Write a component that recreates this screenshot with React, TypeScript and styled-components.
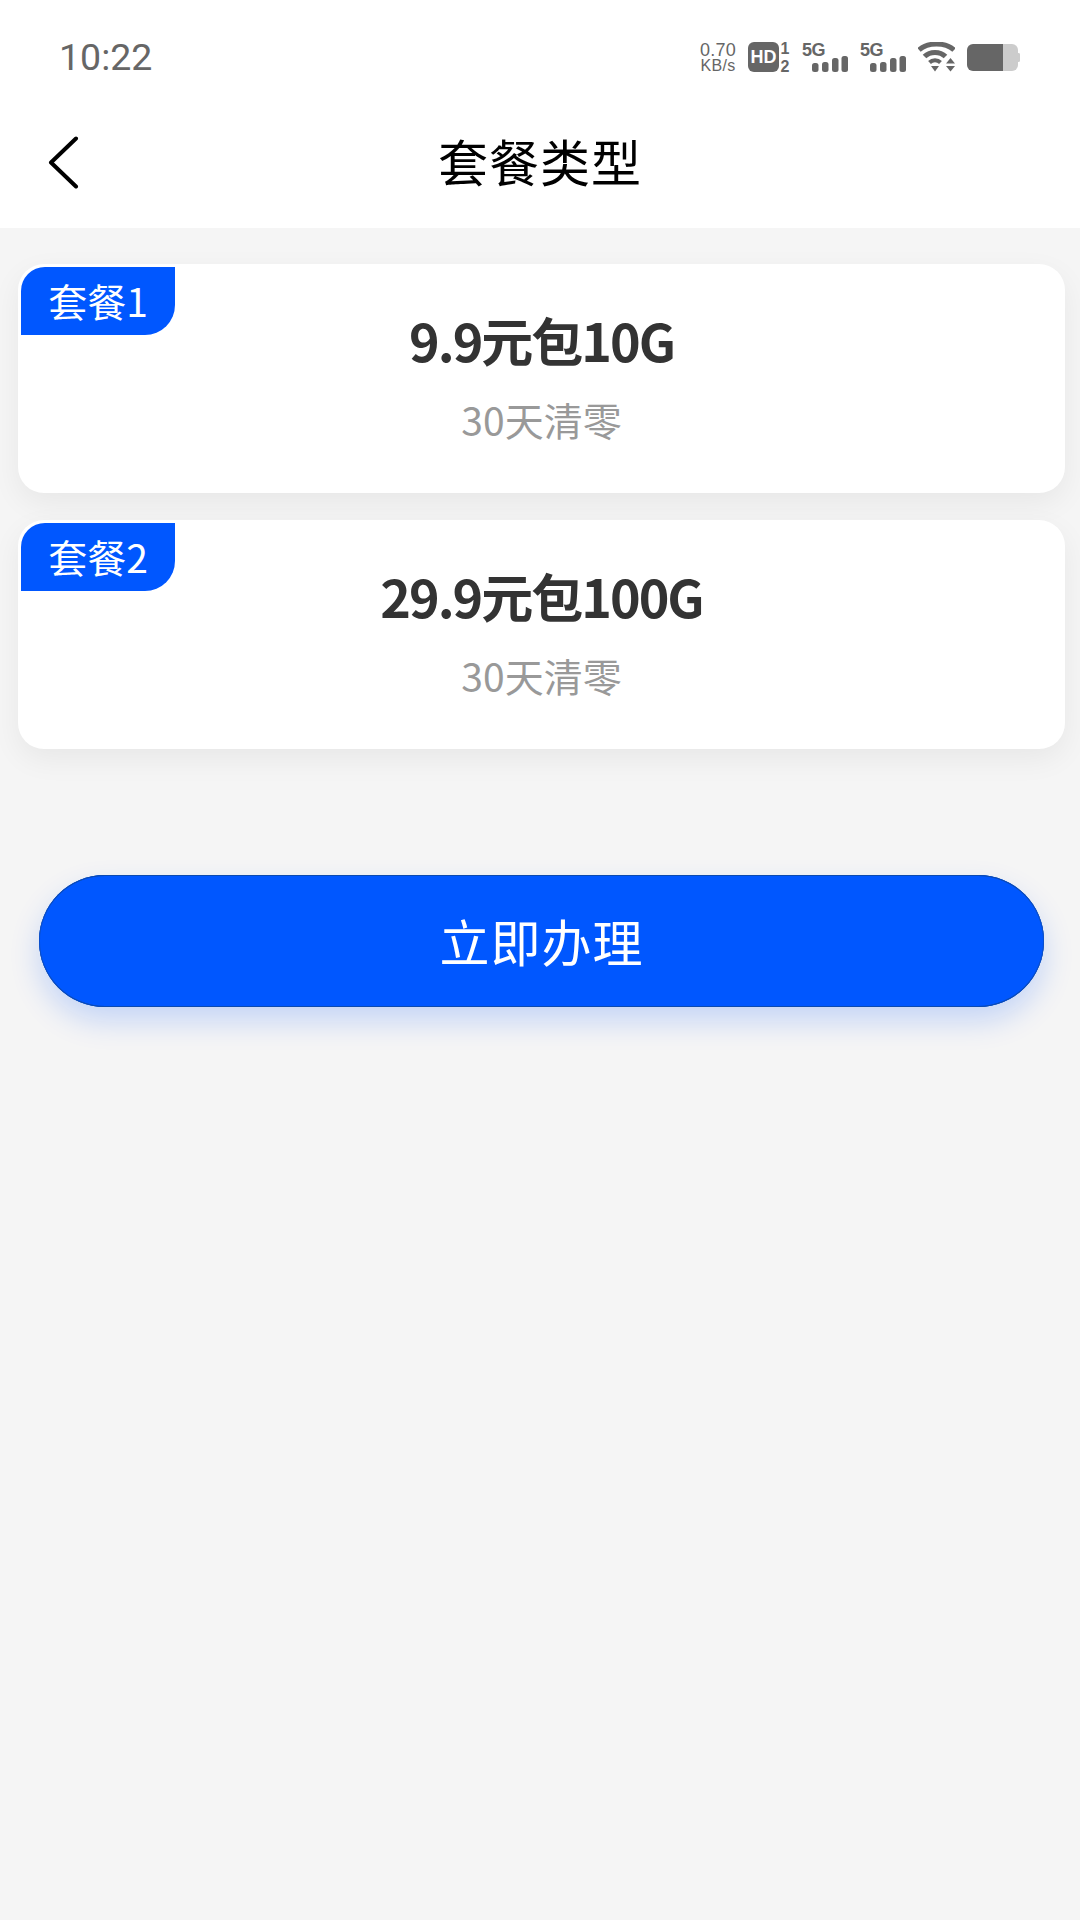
import styled, { createGlobalStyle } from "styled-components";

const GlobalStyle = createGlobalStyle`
  html, body {
    margin: 0;
    padding: 0;
    background-color: #f5f5f5;
  }
  body {
    font-family: "Noto Sans CJK SC", "Noto Sans", sans-serif;
  }
`;

const Page = styled.div`
  width: 1080px;
  min-height: 1920px;
  background-color: #f5f5f5;
`;

const Header = styled.header`
  background-color: #fff;
  height: 228px;
`;

const StatusBar = styled.div`
  height: 96px;
  padding: 18px 60px 0 59px;
  box-sizing: border-box;
  display: flex;
  align-items: center;
  justify-content: space-between;
`;

const Time = styled.span`
  font-family: Roboto, "Liberation Sans", sans-serif;
  font-size: 37.5px;
  color: #666;
`;

const StatusIcons = styled.div`
  display: flex;
  align-items: center;
  gap: 12px;
`;

const Speed = styled.div`
  display: flex;
  flex-direction: column;
  align-items: center;
  width: 36px;
  font-family: "Liberation Sans", sans-serif;
  color: #666;
`;

const SpeedValue = styled.span`
  font-size: 18px;
  line-height: 16px;
  letter-spacing: 0.3px;
`;

const SpeedUnit = styled.span`
  font-size: 16px;
  line-height: 15px;
  letter-spacing: 0.3px;
`;

const NavBar = styled.div`
  position: relative;
  height: 132px;
  display: flex;
  align-items: center;
  justify-content: center;
`;

const BackButton = styled.svg`
  position: absolute;
  left: 47px;
  top: 39px;
`;

const Title = styled.h1`
  margin: 0 0 5px;
  font-size: 50px;
  font-weight: 400;
  color: #000;
  letter-spacing: 1px;
`;

const CardList = styled.div`
  display: flex;
  flex-direction: column;
  gap: 27px;
  padding: 36px 15px 0 18px;
`;

const StyledCard = styled.div`
  position: relative;
  height: 229px;
  padding-top: 46px;
  box-sizing: border-box;
  border-radius: 26px;
  background-color: #fff;
  box-shadow: 0 10px 30px rgba(0, 0, 0, 0.06);
  text-align: center;
`;

const Tag = styled.span`
  position: absolute;
  left: 3px;
  top: 3px;
  width: 154px;
  height: 68px;
  border-radius: 24px 0 30px 0;
  background-color: #0057ff;
  color: #fff;
  font-size: 39px;
  line-height: 66px;
  text-align: center;
`;

const Price = styled.div`
  font-size: 52px;
  font-weight: 700;
  line-height: 60px;
  letter-spacing: -2px;
  color: #333;
`;

const Note = styled.div`
  margin-top: 24px;
  font-size: 39px;
  line-height: 50px;
  color: #999;
`;

const SubmitButton = styled.button`
  display: block;
  width: 1005px;
  height: 132px;
  margin: 126px 0 0 39px;
  padding: 0 0 3px;
  border: none;
  border-radius: 66px;
  background-color: #0057ff;
  box-shadow: 0 14px 30px rgba(0, 87, 255, 0.2), inset 0 1px 0 #0b4ab0, inset 0 -1px 0 #0b4ab0, inset 0 0 0 1px #0a50d0;
  color: #fff;
  font-family: inherit;
  font-size: 50px;
  letter-spacing: 1px;
`;

const HdIcon = () => (
  <svg width="42" height="40" viewBox="0 -5 42 40">
    <rect x="0" y="0" width="31" height="30" rx="6" fill="#666" />
    <text x="15.5" y="21" textAnchor="middle" fontFamily="Liberation Sans" fontWeight="700" fontSize="18" fill="#fff">HD</text>
    <text x="37" y="11.5" textAnchor="middle" fontFamily="Liberation Sans" fontWeight="700" fontSize="16" fill="#666">1</text>
    <text x="37" y="30" textAnchor="middle" fontFamily="Liberation Sans" fontWeight="700" fontSize="16" fill="#666">2</text>
  </svg>
);

const SignalIcon = () => (
  <svg width="46" height="40" viewBox="0 -5 46 40">
    <text x="0" y="14" fontFamily="Liberation Sans" fontWeight="700" fontSize="18" letterSpacing="-0.5" fill="#666">5G</text>
    <rect x="10" y="21" width="6.5" height="9" rx="2.5" fill="#666" />
    <rect x="20" y="20" width="6.5" height="10" rx="2.5" fill="#666" />
    <rect x="30" y="16" width="6.5" height="14" rx="2.5" fill="#666" />
    <rect x="39.5" y="14" width="6.5" height="16" rx="2.5" fill="#666" />
  </svg>
);

const WifiIcon = () => (
  <svg width="37" height="30" viewBox="0 0 37 30">
    <path d="M1 8 C10 0 27 0 36 8" fill="none" stroke="#666" strokeWidth="5" />
    <path d="M6.5 14.5 C12 9 22 9 27.5 14.5" fill="none" stroke="#666" strokeWidth="5" />
    <path d="M11.5 20.5 C14.5 17.5 19.5 17.5 22.5 20.5" fill="none" stroke="#666" strokeWidth="4" />
    <path d="M13 24 H21 L17 29.5 Z" fill="#666" />
    <path d="M32.5 16 L37 21.5 H28 Z" fill="#666" />
    <path d="M28 24 H37 L32.5 29.5 Z" fill="#666" />
  </svg>
);

const BatteryIcon = () => (
  <svg width="53" height="27" viewBox="0 0 53 27">
    <path d="M36 0 H45 a6 6 0 0 1 6 6 V21 a6 6 0 0 1 -6 6 H36 Z" fill="#ccc" />
    <path d="M51 9 H51.5 a1.5 1.5 0 0 1 1.5 1.5 V16.5 a1.5 1.5 0 0 1 -1.5 1.5 H51 Z" fill="#ccc" />
    <path d="M6 0 H36 V27 H6 a6 6 0 0 1 -6 -6 V6 a6 6 0 0 1 6 -6 Z" fill="#666" />
  </svg>
);

const plans = [
  { tag: "套餐1", price: "9.9元包10G", note: "30天清零" },
  { tag: "套餐2", price: "29.9元包100G", note: "30天清零" },
];

const App = () => {
  return (
    <Page>
      <GlobalStyle />
      <Header>
        <StatusBar>
          <Time>10:22</Time>
          <StatusIcons>
            <Speed>
              <SpeedValue>0.70</SpeedValue>
              <SpeedUnit>KB/s</SpeedUnit>
            </Speed>
            <HdIcon />
            <SignalIcon />
            <SignalIcon />
            <WifiIcon />
            <BatteryIcon />
          </StatusIcons>
        </StatusBar>
        <NavBar>
          <BackButton width="32" height="54" viewBox="0 0 32 54">
            <path d="M29 3.5 L4 27.5 L29 51.5" fill="none" stroke="#000" strokeWidth="4" strokeLinecap="round" strokeLinejoin="round" />
          </BackButton>
          <Title>套餐类型</Title>
        </NavBar>
      </Header>
      <CardList>
        {plans.map((plan) => (
          <StyledCard key={plan.tag}>
            <Tag>{plan.tag}</Tag>
            <Price>{plan.price}</Price>
            <Note>{plan.note}</Note>
          </StyledCard>
        ))}
      </CardList>
      <SubmitButton>立即办理</SubmitButton>
    </Page>
  );
};

export default App;
